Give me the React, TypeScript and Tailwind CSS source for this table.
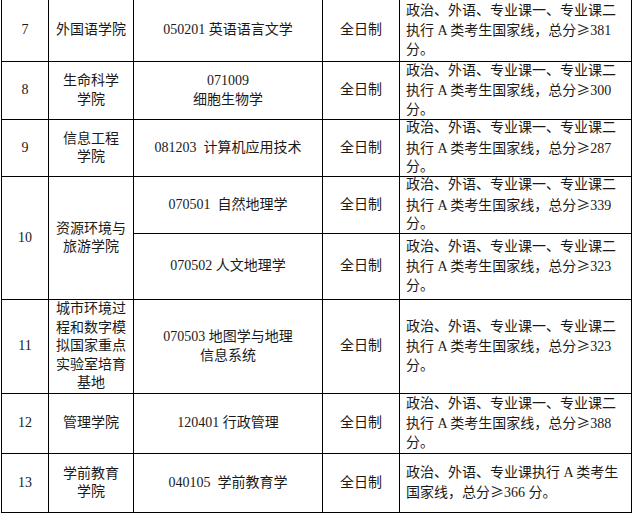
const ge = (
  <span className="font-['Noto_Sans_CJK_SC',sans-serif]">≥</span>
)

type Row = {
  no?: string
  span?: boolean
  college?: string[]
  major: string[]
  score: string
  rule?: 'short'
}

const rows: Row[] = [
  { no: '7', college: ['外国语学院'], major: ['050201 英语语言文学'], score: '381' },
  { no: '8', college: ['生命科学', '学院'], major: ['071009', '细胞生物学'], score: '300' },
  { no: '9', college: ['信息工程', '学院'], major: ['081203  计算机应用技术'], score: '287' },
  { no: '10', span: true, college: ['资源环境与', '旅游学院'], major: ['070501  自然地理学'], score: '339' },
  { major: ['070502 人文地理学'], score: '323' },
  {
    no: '11',
    college: ['城市环境过', '程和数字模', '拟国家重点', '实验室培育', '基地'],
    major: ['070503 地图学与地理', '信息系统'],
    score: '323',
  },
  { no: '12', college: ['管理学院'], major: ['120401 行政管理'], score: '388' },
  { no: '13', college: ['学前教育', '学院'], major: ['040105  学前教育学'], score: '366', rule: 'short' },
]

function Lines({ lines }: { lines: string[] }) {
  return (
    <div className="whitespace-pre">
      {lines.map((l) => (
        <div key={l}>{l}</div>
      ))}
    </div>
  )
}

function Score({ score, rule }: { score: string; rule?: 'short' }) {
  if (rule === 'short') {
    return (
      <div className="whitespace-pre">
        <div>政治、外语、专业课执行 A 类考生</div>
        <div>
          国家线，总分{ge}
          {score} 分。
        </div>
      </div>
    )
  }
  return (
    <div className="whitespace-pre">
      <div>政治、外语、专业课一、专业课二</div>
      <div>
        执行 A 类考生国家线，总分{ge}
        {score}
      </div>
      <div>分。</div>
    </div>
  )
}

const cell = 'flex items-center justify-center bg-white text-center'

export default function App() {
  return (
    <div className="min-h-[516px] bg-white">
      <div className="-mt-px ml-px grid w-[631px] grid-cols-[46px_84px_188px_76px_231px] grid-rows-[61px_57px_56px_56px_65px_93px_59px_58px] gap-px bg-black p-px font-['Liberation_Serif','Noto_Sans_CJK_SC',serif] text-[14px] leading-[18.5px] text-[#1a1a1a]">
        {rows.map((r, i) => (
          <div key={i} className="contents">
            {r.no && (
              <div className={`${cell} ${r.span ? 'row-span-2' : ''}`}>{r.no}</div>
            )}
            {r.college && (
              <div className={`${cell} ${r.span ? 'row-span-2' : ''}`}>
                <Lines lines={r.college} />
              </div>
            )}
            <div className={cell}>
              <Lines lines={r.major} />
            </div>
            <div className={cell}>全日制</div>
            <div className="flex items-center bg-white pl-[6px]">
              <Score score={r.score} rule={r.rule} />
            </div>
          </div>
        ))}
      </div>
    </div>
  )
}
